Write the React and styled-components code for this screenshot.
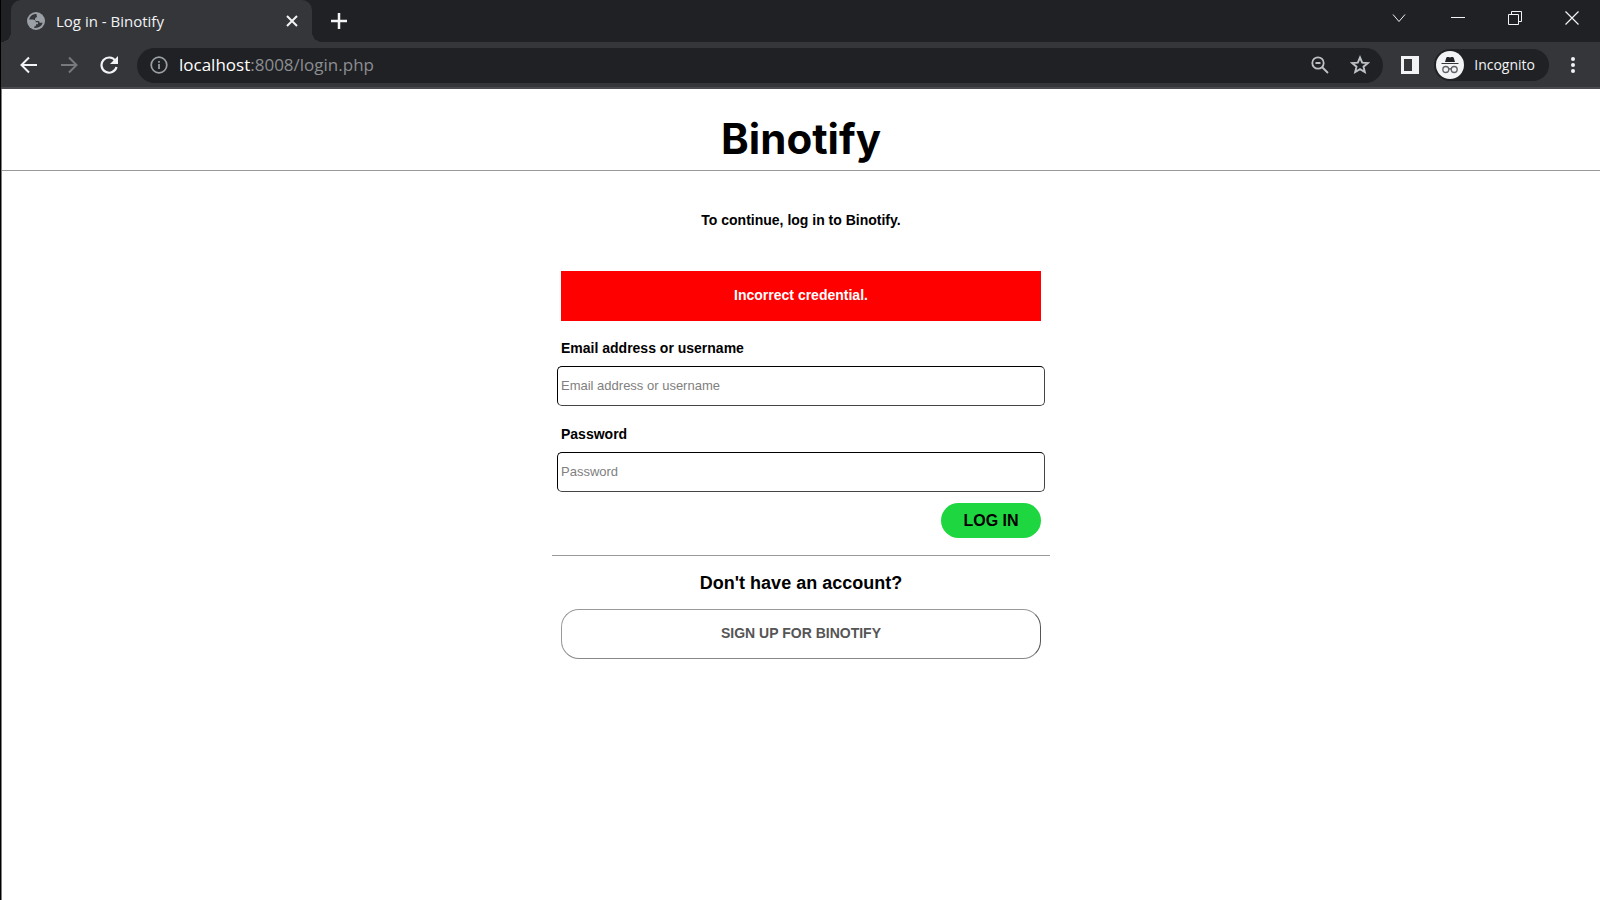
import React from 'react';
import styled, { createGlobalStyle } from 'styled-components';

const GlobalStyle = createGlobalStyle`
  *, *::before, *::after { box-sizing: border-box; }
  body { margin: 0; background: #fff; }
  button, input { font: inherit; }
`;

const Window = styled.div`
  display: flex;
  flex-direction: column;
  min-height: 100vh;
  background: #35363a;
  border-left: 1px solid #000;
`;

const TabStrip = styled.div`
  display: flex;
  justify-content: space-between;
  height: 42px;
  padding-left: 10px;
  background: #202124;
`;

const Tabs = styled.div`
  display: flex;
  align-items: center;
`;

const Tab = styled.div`
  position: relative;
  display: flex;
  align-items: center;
  gap: 11px;
  width: 301px;
  height: 42px;
  padding: 0 10px 0 16px;
  border-radius: 10px 10px 0 0;
  background: #35363a;
  color: #f1f3f4;
  font: 15px/20px "Open Sans", "Noto Sans", sans-serif;

  &::before, &::after {
    content: "";
    position: absolute;
    bottom: 0;
    width: 10px;
    height: 10px;
  }
  &::before {
    right: 100%;
    background: radial-gradient(circle at 0 0, transparent 10px, #35363a 10px);
  }
  &::after {
    left: 100%;
    background: radial-gradient(circle at 100% 0, transparent 10px, #35363a 10px);
  }
`;

const TabTitle = styled.span`
  flex: 1;
`;

const IconButton = styled.button`
  display: flex;
  align-items: center;
  justify-content: center;
  width: ${p => p.$width || 40}px;
  height: ${p => p.$height || 36}px;
  padding: 0;
  border: 0;
  background: none;
  color: ${p => p.$color || '#f1f3f4'};
  flex: none;
`;

const WindowControls = styled.div`
  display: flex;
`;

const Toolbar = styled.div`
  display: flex;
  align-items: center;
  height: 47px;
  padding: 1px 7px 0 8px;
  border-bottom: 2px solid #4a4b4e;
`;

const AddressBar = styled.div`
  display: flex;
  align-items: center;
  flex: 1;
  height: 35px;
  margin: 0 15px 0 8px;
  padding: 0 3px 0 13px;
  border-radius: 18px;
  background: #202124;
  color: #9aa0a6;
`;

const Address = styled.div`
  flex: 1;
  margin-left: 11px;
  color: #8b8e92;
  font: 17px/24px "Open Sans", "Noto Sans", sans-serif;
`;

const Host = styled.span`
  color: #fff;
`;

const Profile = styled.button`
  display: flex;
  align-items: center;
  gap: 10px;
  height: 32px;
  margin: 0 4px 0 12px;
  padding: 0 14px 0 2px;
  border: 0;
  border-radius: 16px;
  background: #202124;
  color: #f1f3f4;
  font: 14px/20px "Open Sans", "Noto Sans", sans-serif;
`;

const Page = styled.div`
  flex: 1;
  border-left: 1px solid #808080;
  background: #fff;
  color: #000;
  font-family: "Liberation Sans", Arial, sans-serif;
`;

const Header = styled.header`
  padding: 24px 0 5px;
  border-bottom: 1px solid #9a9a9a;
  text-align: center;
`;

const Brand = styled.h1`
  margin: 0;
  font: 700 42px/52px Inter, sans-serif;
`;

const Main = styled.main`
  width: 498px;
  max-width: 100%;
  margin: 0 auto;
`;

const Intro = styled.p`
  margin: 0;
  padding: 38px 0 40px;
  font-size: 14px;
  line-height: 22px;
  font-weight: 700;
  text-align: center;
`;

const Form = styled.form`
  display: flex;
  flex-direction: column;
  padding: 0 5px 17px;
  border-bottom: 1px solid #9a9a9a;
`;

const Alert = styled.div`
  margin: 0 4px 16px;
  padding-bottom: 2px;
  background: #f00;
  color: #fff;
  font-size: 14px;
  line-height: 48px;
  font-weight: 700;
  text-align: center;
`;

const Field = styled.div`
  display: flex;
  flex-direction: column;
  gap: 7px;
  padding-bottom: ${p => p.$last ? 11 : 17}px;
`;

const Label = styled.label`
  padding-left: 4px;
  font-size: 14px;
  line-height: 22px;
  font-weight: 700;
`;

const TextInput = styled.input`
  height: 40px;
  padding: 0 3px 2px;
  border: 1px solid;
  border-color: #000 #444 #444 #000;
  border-radius: 5px;
  background: #fff;
  font-size: 13px;

  &::placeholder { color: #808080; opacity: 1; }
`;

const LoginButton = styled.button`
  align-self: flex-end;
  width: 100px;
  height: 35px;
  margin-right: 4px;
  padding: 0;
  border: 0;
  border-radius: 18px;
  background: #1ed740;
  color: #000;
  font-size: 16px;
  font-weight: 700;
`;

const SignUp = styled.section`
  display: flex;
  flex-direction: column;
  gap: 14px;
  padding: 15px 9px;
  text-align: center;
`;

const SignUpTitle = styled.h2`
  margin: 0;
  font-size: 18px;
  line-height: 24px;
  font-weight: 700;
`;

const SignUpButton = styled.button`
  height: 50px;
  padding: 0 0 2px;
  border: 1px solid;
  border-color: #999 #555 #888 #999;
  border-radius: 18px;
  background: #fff;
  color: #555;
  font-size: 14px;
  font-weight: 700;
`;

const Svg = ({ size, box = 24, children, ...rest }) => (
  <svg width={size} height={size} viewBox={`0 0 ${box} ${box}`} fill="none" stroke="currentColor" aria-hidden="true" {...rest}>
    {children}
  </svg>
);

const Globe = () => (
  <Svg size={18} box={18} color="#9aa0a6">
    <circle cx="9" cy="9" r="9" fill="currentColor" stroke="none" />
    <path fill="#35363a" stroke="none" d="M9.6 2.1C6 1.800 3 4 2.200 7.600H5.500C7.800 7.600 8.800 8.700 8.800 10.300H11V12.200H9V13.200C9 14.100 8.200 14.600 7.200 14.600V15.800C10.800 16.600 14.600 14.500 15.700 10.800H13.200C12.500 10.800 12.200 10 12.200 9.200L10 9.100C8.700 9.100 8 8.300 8 7.200C8 6.100 8.700 5.300 9.900 5.300V4.200C9.900 3.600 9.200 3.200 9.600 2.100Z" />
  </Svg>
);

const Arrow = ({ flip }) => (
  <Svg size={18} box={18} strokeWidth="2">
    <path d={flip ? 'M1 9H16M9 1.500L16.500 9L9 16.500' : 'M17 9H2M9 1.500L1.500 9L9 16.500'} />
  </Svg>
);

const Incognito = () => (
  <Svg size={28} box={28}>
    <circle cx="14" cy="14" r="14" fill="#f1f3f4" stroke="none" />
    <path fill="#202124" stroke="none" d="M11.400 6H12.500L14 6.500L15.500 6H16.600Q17.500 6 17.800 7L19 11H9L10.200 7Q10.500 6 11.400 6Z" />
    <path stroke="#35363a" d="M5.500 12.500H22.500" />
    <g stroke="#5f6368" strokeWidth="1.300">
      <circle cx="9.800" cy="18.500" r="3" />
      <circle cx="18.200" cy="18.500" r="3" />
      <path d="M12.800 18.200Q14 17.300 15.200 18.200" />
    </g>
  </Svg>
);

export default function App() {
  return (
    <>
      <GlobalStyle />
      <Window>
        <TabStrip>
          <Tabs>
            <Tab>
              <Globe />
              <TabTitle>Log in - Binotify</TabTitle>
              <IconButton $width={20} $height={20} aria-label="Close tab">
                <Svg size={12} box={12} strokeWidth="2"><path d="M1 1L11 11M11 1L1 11" /></Svg>
              </IconButton>
            </Tab>
            <IconButton $width={54} aria-label="New tab">
              <Svg size={16} box={16} strokeWidth="2.500"><path d="M8 0V16M0 8H16" /></Svg>
            </IconButton>
          </Tabs>
          <WindowControls>
            <IconButton $width={60} aria-label="Search tabs">
              <Svg size={14} box={14}><path d="M1 3.500L7 10.500L13 3.500" /></Svg>
            </IconButton>
            <IconButton $width={57} aria-label="Minimize">
              <Svg size={14} box={14}><path d="M0 6.500H14" /></Svg>
            </IconButton>
            <IconButton $width={57} aria-label="Restore">
              <Svg size={14} box={14}><path d="M.5 3.500H10.500V13.500H.5ZM3.500 3.500V.5H13.500V10.500H10.500" /></Svg>
            </IconButton>
            <IconButton $width={57} aria-label="Close">
              <Svg size={14} box={14} strokeWidth="1.200"><path d="M.5 .5L13.500 13.500M13.500 .5L.5 13.500" /></Svg>
            </IconButton>
          </WindowControls>
        </TabStrip>
        <Toolbar>
          <IconButton aria-label="Back"><Arrow /></IconButton>
          <IconButton $color="#77797d" aria-label="Forward"><Arrow flip /></IconButton>
          <IconButton aria-label="Reload">
            <Svg size={18} box={18} strokeWidth="2.200">
              <path d="M15.400 4.800A7.600 7.600 0 1 0 16.500 11" />
              <path fill="currentColor" stroke="none" d="M18 0V8H10Z" />
            </Svg>
          </IconButton>
          <AddressBar>
            <Svg size={18} box={18} strokeWidth="1.700">
              <circle cx="9" cy="9" r="7.800" />
              <path d="M9 8V13M9 5V6.700" />
            </Svg>
            <Address><Host>localhost</Host>:8008/login.php</Address>
            <IconButton $color="#bdc1c6" aria-label="Zoom">
              <Svg size={18} box={18} strokeWidth="1.800">
                <circle cx="7" cy="7" r="5.700" />
                <path d="M11 11L17 17M4.500 7H9.500" />
              </Svg>
            </IconButton>
            <IconButton $color="#bdc1c6" aria-label="Bookmark this tab">
              <Svg size={20} box={20} strokeWidth="1.900">
                <path d="M10 2.500L12.200 7.600L17.700 8.100L13.500 11.700L14.800 17.100L10 14.200L5.200 17.100L6.500 11.700L2.300 8.100L7.800 7.600Z" />
              </Svg>
            </IconButton>
          </AddressBar>
          <IconButton $width={24} aria-label="Side panel">
            <Svg size={18} box={18}>
              <path fill="#f1f3f4" fillRule="evenodd" stroke="none" d="M0 0H18V18H0ZM3 3V15H11V3Z" />
            </Svg>
          </IconButton>
          <Profile><Incognito />Incognito</Profile>
          <IconButton aria-label="Menu">
            <Svg size={18} box={18}>
              <g fill="currentColor" stroke="none"><circle cx="9" cy="3" r="2" /><circle cx="9" cy="9" r="2" /><circle cx="9" cy="15" r="2" /></g>
            </Svg>
          </IconButton>
        </Toolbar>
        <Page>
          <Header><Brand>Binotify</Brand></Header>
          <Main>
            <Intro>To continue, log in to Binotify.</Intro>
            <Form onSubmit={e => e.preventDefault()}>
              <Alert role="alert">Incorrect credential.</Alert>
              <Field>
                <Label htmlFor="username">Email address or username</Label>
                <TextInput id="username" type="text" placeholder="Email address or username" />
              </Field>
              <Field $last>
                <Label htmlFor="password">Password</Label>
                <TextInput id="password" type="password" placeholder="Password" />
              </Field>
              <LoginButton type="submit">LOG IN</LoginButton>
            </Form>
            <SignUp>
              <SignUpTitle>Don't have an account?</SignUpTitle>
              <SignUpButton type="button">SIGN UP FOR BINOTIFY</SignUpButton>
            </SignUp>
          </Main>
        </Page>
      </Window>
    </>
  );
}
